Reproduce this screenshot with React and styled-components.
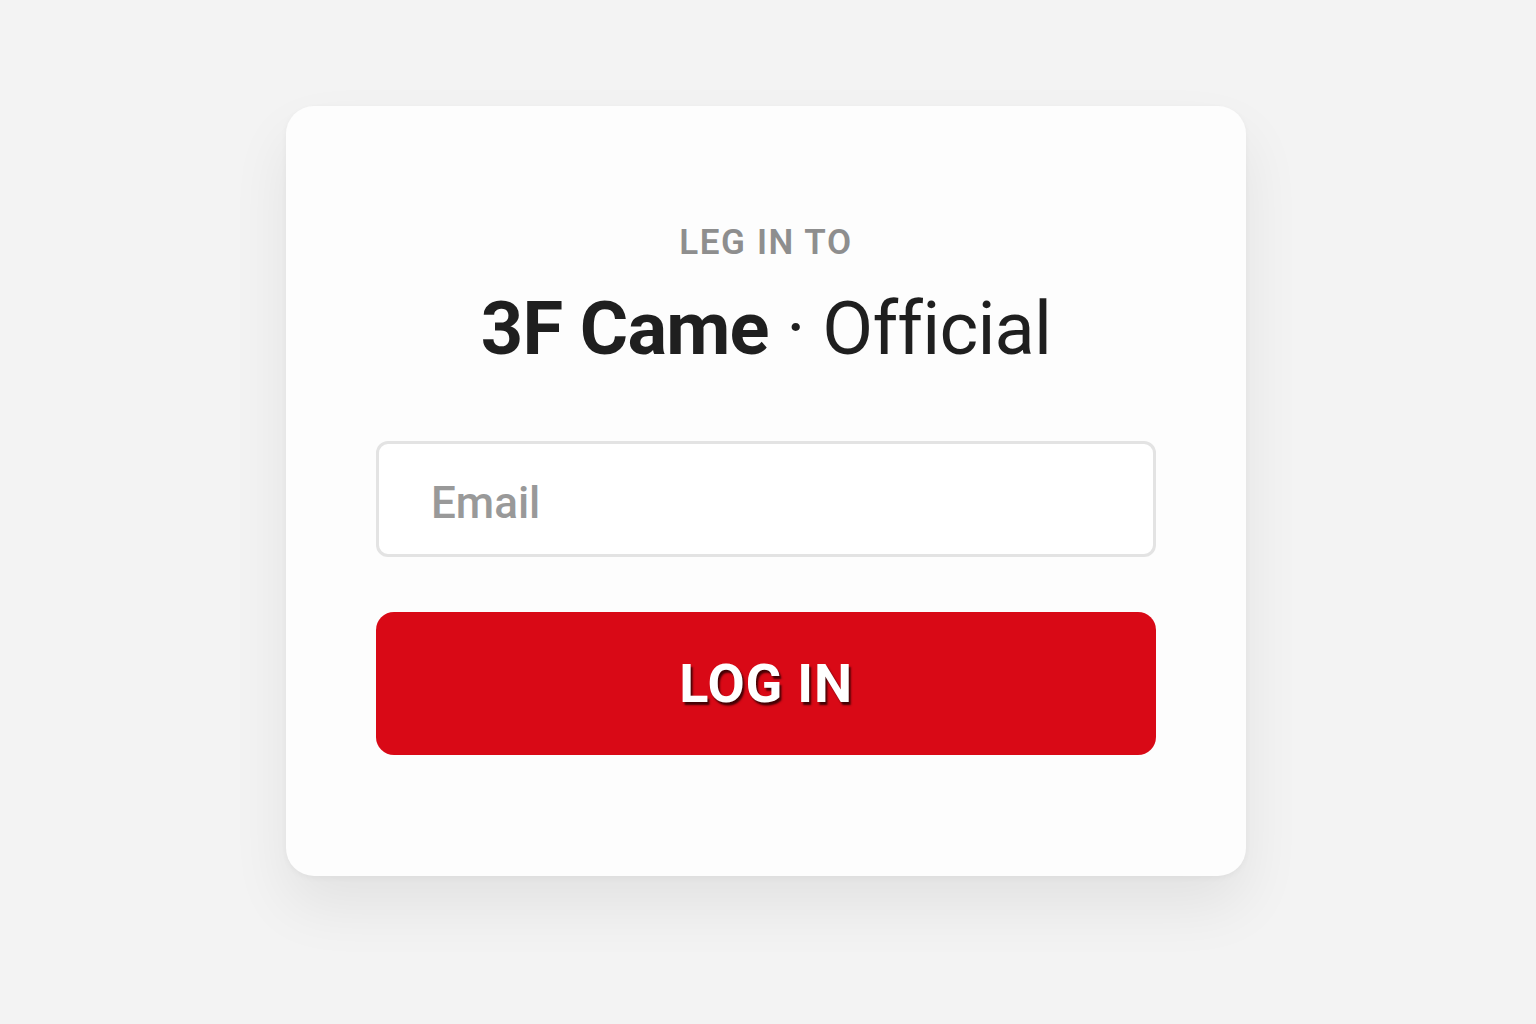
import React from 'react';
import styled, { createGlobalStyle } from 'styled-components';

const GlobalStyle = createGlobalStyle`
  html, body {
    margin: 0;
    padding: 0;
    background: #f3f3f3;
    font-family: Roboto, "Liberation Sans", Arial, sans-serif;
  }
`;

const Page = styled.div`
  min-height: 1024px;
  display: flex;
  justify-content: center;
  align-items: flex-start;
  padding: 106px 4px 0 0;
  box-sizing: border-box;
`;

const Card = styled.div`
  width: 960px;
  height: 770px;
  box-sizing: border-box;
  background: #fdfdfd;
  border-radius: 28px;
  box-shadow: 0 30px 60px rgba(0, 0, 0, 0.07), 0 2px 6px rgba(0, 0, 0, 0.04);
  padding: 120px 90px 0;
  display: flex;
  flex-direction: column;
  align-items: center;
`;

const Eyebrow = styled.div`
  font-size: 35px;
  line-height: 33px;
  font-weight: 600;
  color: #8e8e8e;
  letter-spacing: 1.6px;
  text-transform: uppercase;
`;

const Title = styled.h1`
  margin: 32px 0 0;
  font-size: 74px;
  line-height: 76px;
  font-weight: 400;
  color: #1f1f1f;
  letter-spacing: -0.8px;
  b {
    font-weight: 700;
  }
`;

const Form = styled.form`
  align-self: stretch;
  display: flex;
  flex-direction: column;
  gap: 55px;
  margin-top: 74px;
`;

const Input = styled.input`
  height: 116px;
  box-sizing: border-box;
  border: 3px solid #e3e3e3;
  border-radius: 12px;
  background: #fff;
  padding: 8px 52px 0;
  font-family: inherit;
  font-size: 44px;
  font-weight: 500;
  color: #333;
  outline: none;
  &::placeholder {
    color: #999;
  }
`;

const Button = styled.button`
  height: 143px;
  border: none;
  border-radius: 18px;
  background: #d90916;
  color: #fff;
  font-family: inherit;
  font-size: 54px;
  font-weight: 700;
  letter-spacing: 0.8px;
  text-shadow: 2px 3px 2px rgba(30, 0, 0, 0.8);
  cursor: pointer;
`;

export default function App() {
  return (
    <Page>
      <GlobalStyle />
      <Card>
        <Eyebrow>Leg in to</Eyebrow>
        <Title>
          <b>3F Came</b> · Official
        </Title>
        <Form onSubmit={(e) => e.preventDefault()}>
          <Input type="email" placeholder="Email" />
          <Button type="submit">LOG IN</Button>
        </Form>
      </Card>
    </Page>
  );
}
